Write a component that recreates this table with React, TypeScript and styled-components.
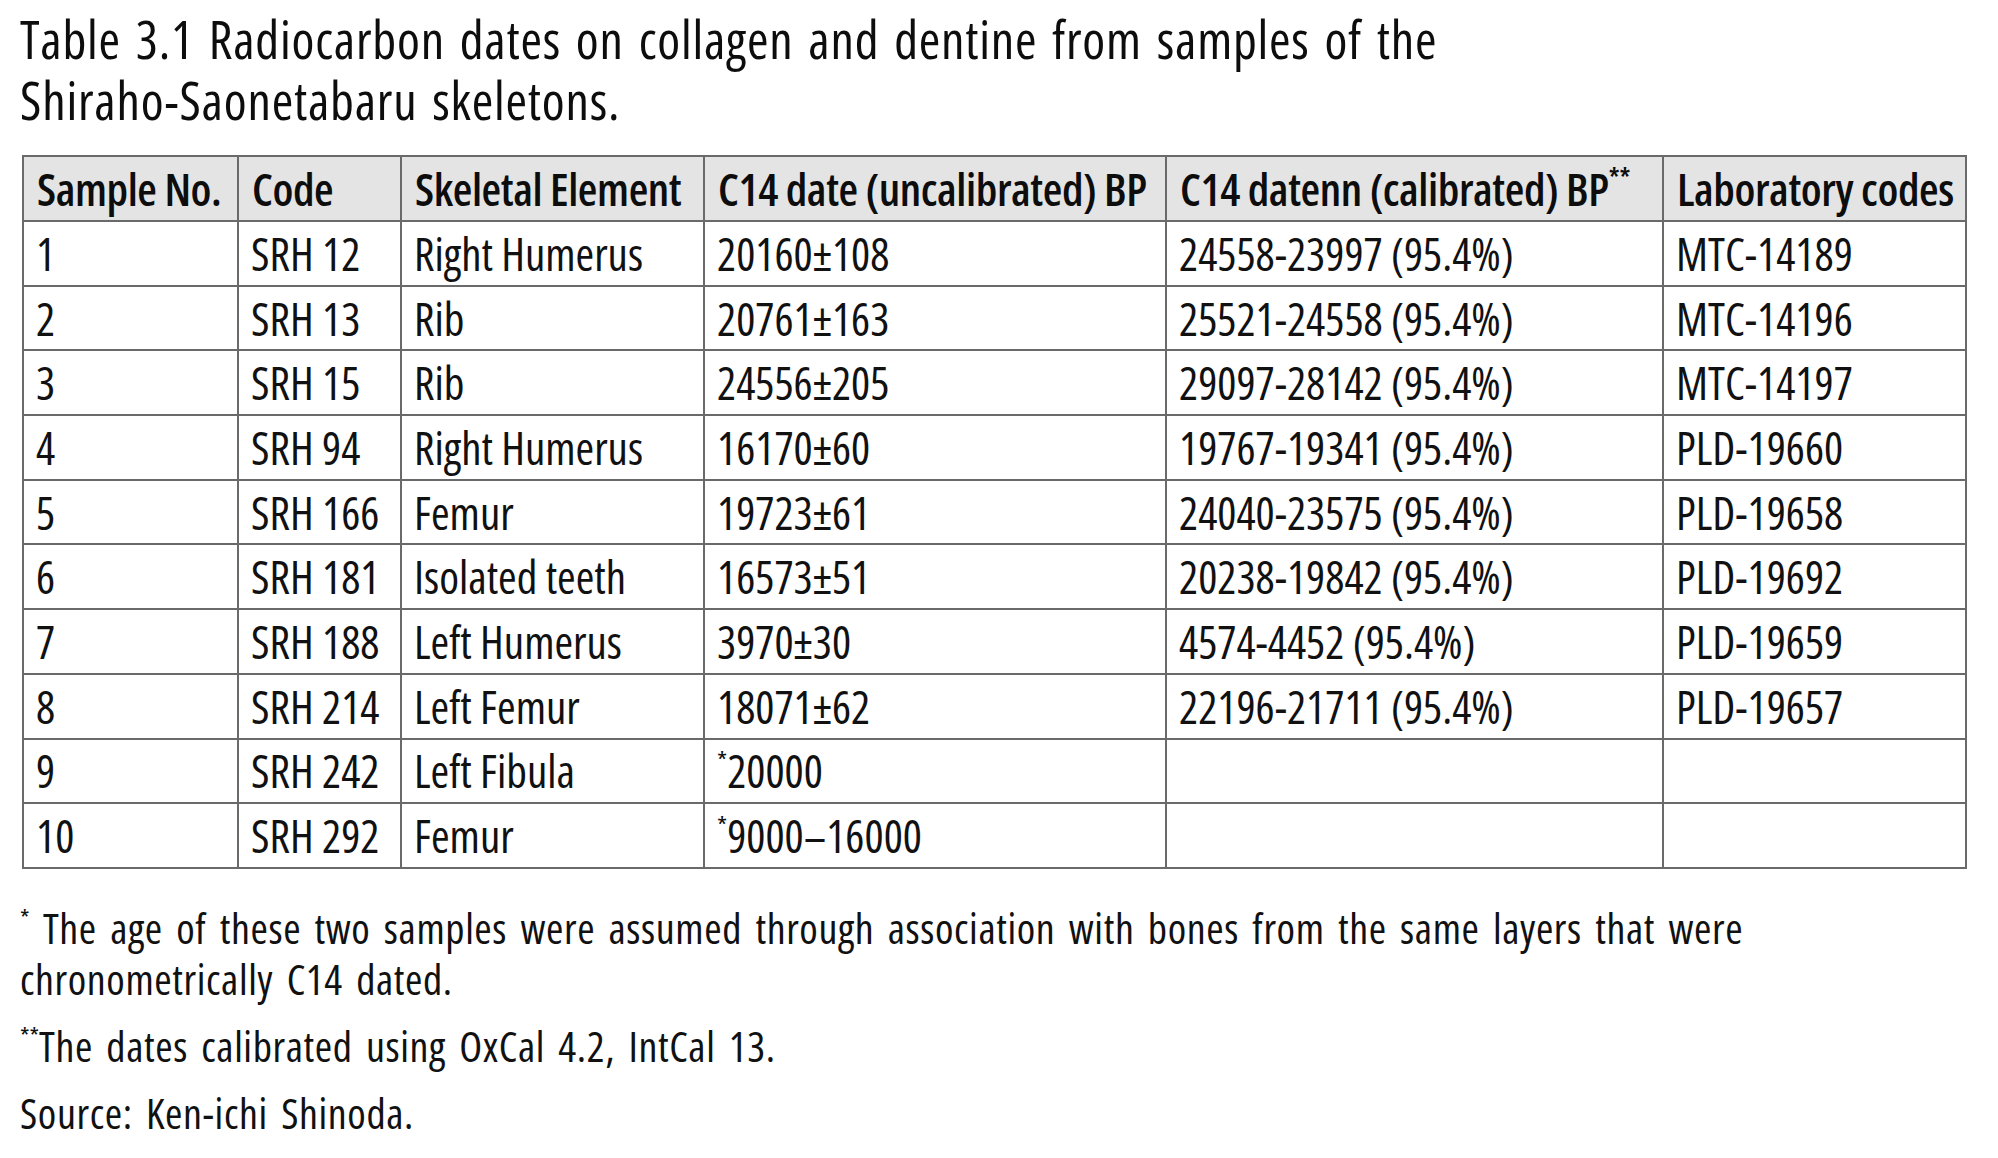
import React from "react";
import styled, { createGlobalStyle } from "styled-components";

const Global = createGlobalStyle`
  html, body { margin: 0; padding: 0; background: #ffffff; }
  body {
    font-family: "Open Sans", "Roboto Condensed", "Liberation Sans", sans-serif;
    font-stretch: 75%;
    color: #111;
  }
`;

const Page = styled.div`
  width: 1998px;
  min-height: 1158px;
  box-sizing: border-box;
  padding: 8px 0 0 20px;
  display: flex;
  flex-direction: column;
`;

const Title = styled.h1`
  margin: 0;
  font-weight: 400;
  font-size: 52px;
  line-height: 61px;
  letter-spacing: 0.8px;
  word-spacing: 4.4px;
  color: #0d0d0d;
`;

const Table = styled.table`
  margin: 25px 0 0 2px;
  border-collapse: collapse;
  table-layout: fixed;
  width: 1943px;
  font-size: 45px;
`;

const Th = styled.th`
  background: #e4e4e4;
  border: 2px solid #6a6a6a;
  height: 63px;
  padding: 0 0 0 13px;
  text-align: left;
  font-weight: 600;
  letter-spacing: -0.4px;
  white-space: nowrap;
  color: #0d0d0d;
`;

const Td = styled.td`
  border: 2px solid #6a6a6a;
  height: 62.7px;
  padding: 0 0 0 12px;
  text-align: left;
  white-space: nowrap;
  color: #111;
`;

const Sup = styled.sup`
  font-size: 0.58em;
  vertical-align: 0.7em;
  line-height: 0;
  letter-spacing: 0;
`;

const Notes = styled.div`
  margin-top: 33px;
  display: flex;
  flex-direction: column;
  gap: 16px;
  font-size: 42px;
  line-height: 51px;
  letter-spacing: 0.6px;
  word-spacing: 5px;
  color: #111;
  max-width: 1900px;
`;

const Note = styled.p`
  margin: 0;
`;

const widths = [215, 163, 303, 462, 497, 303];

type Row = [string, string, string, React.ReactNode, string, string];

const rows: Row[] = [
  ["1", "SRH 12", "Right Humerus", "20160±108", "24558-23997 (95.4%)", "MTC-14189"],
  ["2", "SRH 13", "Rib", "20761±163", "25521-24558 (95.4%)", "MTC-14196"],
  ["3", "SRH 15", "Rib", "24556±205", "29097-28142 (95.4%)", "MTC-14197"],
  ["4", "SRH 94", "Right Humerus", "16170±60", "19767-19341 (95.4%)", "PLD-19660"],
  ["5", "SRH 166", "Femur", "19723±61", "24040-23575 (95.4%)", "PLD-19658"],
  ["6", "SRH 181", "Isolated teeth", "16573±51", "20238-19842 (95.4%)", "PLD-19692"],
  ["7", "SRH 188", "Left Humerus", "3970±30", "4574-4452 (95.4%)", "PLD-19659"],
  ["8", "SRH 214", "Left Femur", "18071±62", "22196-21711 (95.4%)", "PLD-19657"],
  ["9", "SRH 242", "Left Fibula", <><Sup>*</Sup>20000</>, "", ""],
  ["10", "SRH 292", "Femur", <><Sup>*</Sup>9000–16000</>, "", ""],
];

export default function App() {
  return (
    <>
      <Global />
      <Page>
        <Title>
          Table 3.1 Radiocarbon dates on collagen and dentine from samples of the
          <br />
          Shiraho-Saonetabaru skeletons.
        </Title>
        <Table>
          <colgroup>
            {widths.map((w, i) => (
              <col key={i} style={{ width: w }} />
            ))}
          </colgroup>
          <thead>
            <tr>
              <Th>Sample No.</Th>
              <Th>Code</Th>
              <Th>Skeletal Element</Th>
              <Th>C14 date (uncalibrated) BP</Th>
              <Th>
                C14 datenn (calibrated) BP<Sup>**</Sup>
              </Th>
              <Th>Laboratory codes</Th>
            </tr>
          </thead>
          <tbody>
            {rows.map((r, i) => (
              <tr key={i}>
                {r.map((c, j) => (
                  <Td key={j}>{c}</Td>
                ))}
              </tr>
            ))}
          </tbody>
        </Table>
        <Notes>
          <Note>
            <Sup>*</Sup> The age of these two samples were assumed through association with bones from the same layers that were
            <br />
            chronometrically C14 dated.
          </Note>
          <Note>
            <Sup>**</Sup>The dates calibrated using OxCal 4.2, IntCal 13.
          </Note>
          <Note>Source: Ken-ichi Shinoda.</Note>
        </Notes>
      </Page>
    </>
  );
}
